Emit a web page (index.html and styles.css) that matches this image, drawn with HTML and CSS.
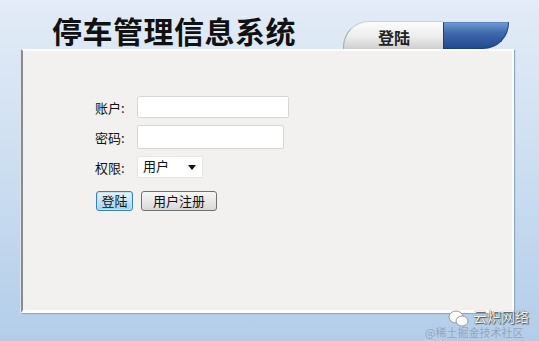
FILE: index.html
```html
<!DOCTYPE html>
<html lang="zh-CN">
<head>
    <meta charset="UTF-8">
    <title>停车管理信息系统</title>
    <link rel="stylesheet" href="styles.css">
</head>
<body>
<div class="header">
    <h1 class="title">停车管理信息系统</h1>
    <div class="tabs">
        <div class="tab-login">登陆</div>
        <div class="tab-blue"></div>
    </div>
</div>
<div class="panel">
    <form class="login-form">
        <div class="row">
            <label>账户:</label>
            <input class="txt" type="text">
        </div>
        <div class="row">
            <label>密码:</label>
            <input class="txt short" type="password">
        </div>
        <div class="row">
            <label>权限:</label>
            <div class="select">用户<span class="arrow"></span></div>
        </div>
        <div class="buttons">
            <button type="button" class="btn btn-focus">登陆</button>
            <button type="button" class="btn btn-wide">用户注册</button>
        </div>
    </form>
</div>
<div class="watermark">
    <svg class="wm-icon" width="22" height="20" viewBox="0 0 22 20">
        <ellipse cx="8" cy="8" rx="7" ry="6" fill="#fff" stroke="#9a9a9a" stroke-width="1"/>
        <ellipse cx="14" cy="12" rx="6" ry="5" fill="#fff" stroke="#9a9a9a" stroke-width="1"/>
    </svg>
    <span class="wm-name">云炽网络</span>
    <span class="wm-sub">@稀土掘金技术社区</span>
</div>
</body>
</html>
```

FILE: styles.css
```css
body, html {
    margin: 0;
    padding: 0;
    width: 100%;
    height: 100%;
    overflow: hidden;
}

body {
    position: relative;
    font-family: "Noto Sans CJK SC", "DejaVu Sans", sans-serif;
    background: linear-gradient(to bottom, #e3ecf7 0%, #cfdff1 45%, #b3cde9 100%);
}

.header {
    display: flex;
    align-items: flex-end;
    height: 49px;
    padding-left: 52px;
}

.title {
    margin: 0 0 2px 0;
    font-size: 30px;
    line-height: 34px;
    font-weight: bold;
    color: #111;
    letter-spacing: 0.5px;
    width: 291px;
}

.tabs {
    display: flex;
    align-items: flex-end;
}

.tab-login {
    width: 100px;
    height: 28px;
    box-sizing: border-box;
    padding-left: 34px;
    font-size: 16px;
    line-height: 30px;
    font-weight: bold;
    color: #222;
    border-radius: 26px 0 0 0;
    border-left: 1px solid #a8a8a8;
    border-top: 1px solid #cfcfcf;
    background: linear-gradient(to bottom, #fdfdfd 0%, #ececec 55%, #cfcfcf 100%);
}

.tab-blue {
    width: 66px;
    height: 27px;
    box-sizing: border-box;
    border-radius: 0 0 26px 0;
    border: 1px solid #1d3e7d;
    border-top-color: #5f86c4;
    background: linear-gradient(to bottom, #6f97d2 0%, #3f69ad 40%, #234a8c 100%);
}

.panel {
    margin-left: 21px;
    width: 493px;
    height: 264px;
    box-sizing: border-box;
    background: #f2f1f0;
    border: 2px solid #fdfdfd;
    border-left: 2px solid #8b8b8b;
    border-bottom: 3px solid #fdfdfd;
    box-shadow: 1px 1px 1px #8fa8c4, -1px 0 0 #d9e4f0;
}

.login-form {
    padding: 45px 0 0 72px;
    font-size: 13px;
    color: #111;
}

.row {
    display: flex;
    align-items: center;
    margin-bottom: 7px;
}

.row label {
    width: 42px;
}

.txt {
    width: 152px;
    height: 22px;
    box-sizing: border-box;
    margin: 0;
    background: #fff;
    border: 1px solid #d6d6d6;
    border-radius: 2px;
}

.txt.short {
    width: 147px;
    height: 24px;
}

.select {
    position: relative;
    width: 66px;
    height: 22px;
    box-sizing: border-box;
    padding-left: 5px;
    line-height: 18px;
    font-size: 13px;
    background: #fff;
    border: 1px solid #e6e6e6;
}

.arrow {
    position: absolute;
    right: 6px;
    top: 8px;
    border-left: 4px solid transparent;
    border-right: 4px solid transparent;
    border-top: 5px solid #111;
}

.buttons {
    display: flex;
    gap: 8px;
    margin-top: 13px;
    margin-left: 1px;
}

.btn {
    height: 20px;
    box-sizing: border-box;
    padding: 0;
    font-family: "Noto Sans CJK SC", sans-serif;
    font-size: 13px;
    line-height: 16px;
    color: #111;
    border: 1px solid #707070;
    border-radius: 3px;
    background: linear-gradient(to bottom, #f6f6f6 0%, #e8e8e8 50%, #d8d8d8 100%);
}

.btn-focus {
    width: 37px;
    border-color: #3c7fb1;
    background: linear-gradient(to bottom, #e5f4fc 0%, #c4e5f6 50%, #98d1ef 100%);
    box-shadow: inset 0 0 0 1px #bde3f5;
}

.btn-wide {
    width: 76px;
}

.watermark {
    position: absolute;
    left: 425px;
    top: 308px;
    width: 112px;
    height: 32px;
}

.wm-icon {
    position: absolute;
    left: 23px;
    top: 1px;
}

.wm-name {
    position: absolute;
    left: 48px;
    top: 1px;
    font-size: 14px;
    line-height: 14px;
    color: #f4f4f4;
    text-shadow: 0 0 1px #333, 1px 1px 1px #555;
    white-space: nowrap;
}

.wm-sub {
    position: absolute;
    left: 0;
    top: 19px;
    font-size: 11px;
    line-height: 11px;
    color: rgba(120, 130, 145, 0.55);
    white-space: nowrap;
}
```
